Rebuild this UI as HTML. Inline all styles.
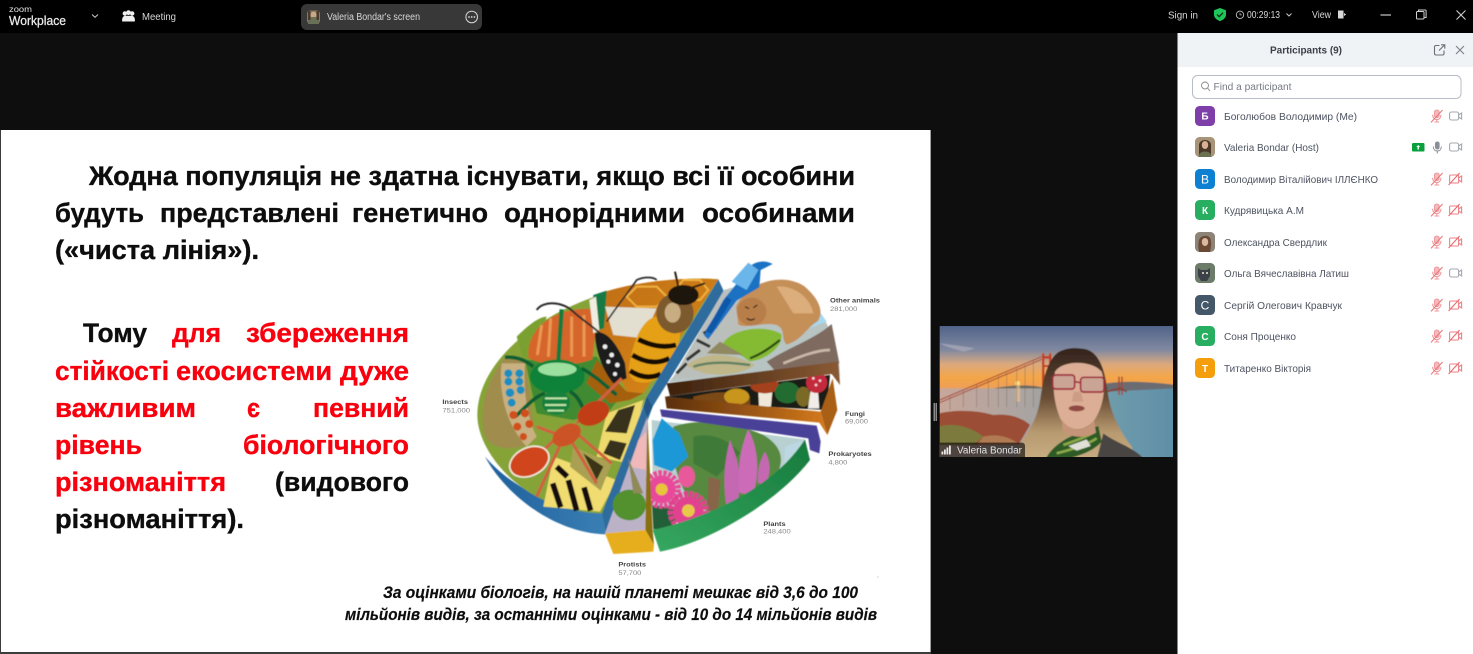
<!DOCTYPE html>
<html lang="uk"><head><meta charset="utf-8"><title>Zoom Workplace</title>
<style>
html,body{margin:0;padding:0;background:#0e0e0e;width:1473px;height:654px;overflow:hidden}
svg{display:block;font-family:"Liberation Sans",sans-serif}
.w{font-size:27px;font-weight:700;fill:#0a0a0a;stroke:#0a0a0a;stroke-width:.35}
.r{fill:#f80010;stroke:#f80010}
.f{font-size:16.5px;font-weight:700;font-style:italic;fill:#111;stroke:#111;stroke-width:.2}
.n{font-size:10.5px;fill:#4d5360}
.t{font-size:10px;fill:#d8d8d8}
.lb{font-size:20px;font-weight:700;fill:#444}
.lv{font-size:20px;fill:#888}
</style></head><body>
<svg width="1473" height="654" viewBox="0 0 1473 654" xmlns="http://www.w3.org/2000/svg">
<defs>
<filter id="b1" x="-5%" y="-5%" width="110%" height="110%"><feGaussianBlur stdDeviation="0.35"/></filter>
<filter id="b2" x="-5%" y="-5%" width="110%" height="110%"><feGaussianBlur stdDeviation="1.5"/></filter>
<filter id="b3" x="-5%" y="-5%" width="110%" height="110%"><feGaussianBlur stdDeviation="1.6"/></filter>
<linearGradient id="sky" x1="0" y1="0" x2="0" y2="1"><stop offset="0" stop-color="#4c5f86"/><stop offset=".4" stop-color="#8089a0"/><stop offset=".62" stop-color="#dca97e"/><stop offset=".82" stop-color="#f4a648"/><stop offset="1" stop-color="#ee9f58"/></linearGradient>
<linearGradient id="wat" x1="0" y1="0" x2="1" y2="0"><stop offset="0" stop-color="#c9a79b"/><stop offset=".4" stop-color="#a8a4a2"/><stop offset=".72" stop-color="#6f9cab"/><stop offset="1" stop-color="#5f8ea8"/></linearGradient>
<linearGradient id="hair" x1="0" y1="0" x2="0" y2="1"><stop offset="0" stop-color="#33231c"/><stop offset=".45" stop-color="#6a4e36"/><stop offset=".75" stop-color="#b89a70"/><stop offset="1" stop-color="#c8ad82"/></linearGradient>
<linearGradient id="org" x1="0" y1="0" x2="1" y2="1"><stop offset="0" stop-color="#c06e14"/><stop offset="1" stop-color="#d98a1c"/></linearGradient>
<linearGradient id="rim" x1="0" y1="0" x2="1" y2="0"><stop offset="0" stop-color="#1f5f9c"/><stop offset="1" stop-color="#3a7fb4"/></linearGradient>
<linearGradient id="grn" x1="0" y1="1" x2="1" y2="0"><stop offset="0" stop-color="#36a860"/><stop offset="1" stop-color="#167a3c"/></linearGradient>
<linearGradient id="fb" x1="0" y1="0" x2="1" y2="0"><stop offset="0" stop-color="#5a2e0c"/><stop offset="1" stop-color="#d57a1c"/></linearGradient>
<linearGradient id="fd" x1="0" y1="0" x2="1" y2="0"><stop offset="0" stop-color="#3c200c"/><stop offset="1" stop-color="#8a5a34"/></linearGradient>
<g id="micoff" fill="none" stroke="#ee9a9e" stroke-width="1.100">
<rect x="3.500" y="0" width="4.600" height="7.600" rx="2.300" fill="#f4bcbe"/><path d="M1.600 4.800c0 3 2 4.800 4.200 4.800s4.200-1.800 4.200-4.800M5.800 9.600v2.400M3.400 12h4.800"/><path d="M0 12.400 11.600 0" stroke="#e8787c"/></g>
<g id="cam" fill="none" stroke="#a4a8b0" stroke-width="1.100"><rect x=".6" y="1" width="9" height="8" rx="1.800"/><path d="M9.600 4 12.600 2v6L9.600 6"/></g>
<g id="camoff" fill="none" stroke="#ee8286" stroke-width="1.100"><rect x=".6" y="1" width="9" height="8" rx="1"/><path d="M9.600 4 12.600 2v6L9.600 6"/><path d="M-.4 11 10.600-1" stroke="#e8686c"/></g>
</defs>

<rect width="1473" height="654" fill="#0e0e0e"/>
<rect width="1473" height="33" fill="#000"/>

<text x="9" y="12" font-size="8" fill="#e2e2e2" textLength="23" lengthAdjust="spacingAndGlyphs">zoom</text>
<text x="9" y="25" font-size="12.500" fill="#ececec" stroke="#ececec" stroke-width=".25" textLength="57" lengthAdjust="spacingAndGlyphs">Workplace</text>
<path d="M92 14.500l3 2.800 3-2.800" fill="none" stroke="#c8c8c8" stroke-width="1"/>
<g fill="#f0f0f0"><circle cx="124.800" cy="13.500" r="2.200"/><circle cx="128.500" cy="12.600" r="2.400"/><circle cx="132.200" cy="13.500" r="2.200"/><path d="M122.200 21.500c-.6-4 1.400-5.800 3-5.800h6.600c1.600 0 3.600 1.800 3 5.800z"/></g>
<text x="142" y="20.200" class="t" textLength="34" lengthAdjust="spacingAndGlyphs">Meeting</text>
<rect x="301" y="4" width="181" height="26" rx="6" fill="#383838"/>
<rect x="307" y="10.500" width="13" height="13" rx="3" fill="#8a7a62"/><ellipse cx="313.500" cy="15" rx="3" ry="3.400" fill="#c8a888"/><path d="M308 24v-5c1-2 3-2 5.500-2s4.500 0 5.500 2v5z" fill="#6a7058"/><rect x="308" y="11" width="2.500" height="9" fill="#4a3a2c"/><rect x="316.500" y="11" width="2.500" height="9" fill="#4a3a2c"/>
<text x="327" y="20.200" class="t" textLength="93" lengthAdjust="spacingAndGlyphs">Valeria Bondar's screen</text>
<circle cx="471.700" cy="17" r="5.800" fill="none" stroke="#d8d8d8" stroke-width="1"/><g fill="#d8d8d8"><circle cx="469" cy="17" r=".9"/><circle cx="471.700" cy="17" r=".9"/><circle cx="474.400" cy="17" r=".9"/></g>

<text x="1168" y="18.500" class="t" textLength="30" lengthAdjust="spacingAndGlyphs">Sign in</text>
<path d="M1220 8l6 2.200v4.600c0 3.200-3 5.200-6 6.400-3-1.200-6-3.200-6-6.400v-4.600z" fill="#1fc45a"/><path d="M1217 14.500l2.200 2.200 3.800-4" fill="none" stroke="#06330f" stroke-width="1.300"/>
<circle cx="1240" cy="14.800" r="3.700" fill="none" stroke="#bdbdbd" stroke-width=".9"/><path d="M1240 12.700v2.200h1.800" fill="none" stroke="#bdbdbd" stroke-width=".7"/>
<text x="1247" y="18.200" class="t" textLength="33" lengthAdjust="spacingAndGlyphs">00:29:13</text>
<path d="M1286.500 13.500l2.500 2.500 2.500-2.500" fill="none" stroke="#c8c8c8" stroke-width="1"/>
<text x="1312" y="18.200" class="t" textLength="19" lengthAdjust="spacingAndGlyphs">View</text>
<rect x="1338" y="10.500" width="5.500" height="8" fill="#d8d8d8"/><path d="M1344 13l2.200 1.500-2.200 1.500z" fill="#d8d8d8"/>
<path d="M1380.500 15h10.500" stroke="#c8c8c8" stroke-width="1.200"/>
<rect x="1416.500" y="11.500" width="7.500" height="7.500" rx="1" fill="none" stroke="#d0d0d0" stroke-width="1"/><path d="M1418.500 11.500v-1.500h6.800a.8.8 0 0 1 .8.800v6.700h-2" fill="none" stroke="#d0d0d0" stroke-width="1"/>
<path d="M1456.500 10.500l9 9M1465.500 10.500l-9 9" stroke="#d0d0d0" stroke-width="1.100"/>

<rect x="0" y="130" width="931" height="524" fill="#3c3c3c"/>
<rect x="1" y="130" width="929.500" height="522" fill="#fff"/>
<g filter="url(#b1)">
<text x="89" y="185" class="w" textLength="766" lengthAdjust="spacingAndGlyphs">Жодна популяція не здатна існувати, якщо всі її особини</text>
<text x="55" y="222" class="w" textLength="89" lengthAdjust="spacingAndGlyphs">будуть</text>
<text x="160" y="222" class="w" textLength="179" lengthAdjust="spacingAndGlyphs">представлені</text>
<text x="352" y="222" class="w" textLength="136" lengthAdjust="spacingAndGlyphs">генетично</text>
<text x="504" y="222" class="w" textLength="181" lengthAdjust="spacingAndGlyphs">однорідними</text>
<text x="702" y="222" class="w" textLength="153" lengthAdjust="spacingAndGlyphs">особинами</text>
<text x="55" y="259" class="w" textLength="204" lengthAdjust="spacingAndGlyphs">(«чиста лінія»).</text>

<text x="83" y="342" class="w" textLength="64" lengthAdjust="spacingAndGlyphs">Тому</text>
<text x="172" y="342" class="w r" textLength="49" lengthAdjust="spacingAndGlyphs">для</text>
<text x="246" y="342" class="w r" textLength="163" lengthAdjust="spacingAndGlyphs">збереження</text>
<text x="55" y="380" class="w r" textLength="114" lengthAdjust="spacingAndGlyphs">стійкості</text>
<text x="176" y="380" class="w r" textLength="156" lengthAdjust="spacingAndGlyphs">екосистеми</text>
<text x="340" y="380" class="w r" textLength="69" lengthAdjust="spacingAndGlyphs">дуже</text>
<text x="55" y="417" class="w r" textLength="141" lengthAdjust="spacingAndGlyphs">важливим</text>
<text x="247" y="417" class="w r" textLength="13" lengthAdjust="spacingAndGlyphs">є</text>
<text x="313" y="417" class="w r" textLength="96" lengthAdjust="spacingAndGlyphs">певний</text>
<text x="55" y="454" class="w r" textLength="87" lengthAdjust="spacingAndGlyphs">рівень</text>
<text x="243" y="454" class="w r" textLength="166" lengthAdjust="spacingAndGlyphs">біологічного</text>
<text x="55" y="491" class="w r" textLength="171" lengthAdjust="spacingAndGlyphs">різноманіття</text>
<text x="275" y="491" class="w" textLength="134" lengthAdjust="spacingAndGlyphs">(видового</text>
<text x="55" y="528" class="w" textLength="189" lengthAdjust="spacingAndGlyphs">різноманіття).</text>

<text x="383" y="598" class="f" textLength="475" lengthAdjust="spacingAndGlyphs">За оцінками біологів, на нашій планеті мешкає від 3,6 до 100</text>
<text x="345" y="620" class="f" textLength="532" lengthAdjust="spacingAndGlyphs">мільйонів видів, за останніми оцінками - від 10 до 14 мільйонів видів</text>
</g>
<rect x="877.500" y="576.500" width="1" height="1" fill="#aaa"/>

<!-- pie -->
<g transform="translate(430 250) scale(.33333)">
<g filter="url(#b2)">
<path d="M165 620C230 740 380 850 527 853L516 788C400 785 250 720 165 620Z" fill="url(#rim)"/>
<path d="M865 88C700 75 480 120 330 220C210 300 140 400 142 500C145 590 230 700 340 750C400 775 460 790 518 790L650 440Z" fill="#86a338"/>
<!-- caterpillar field -->
<path d="M225 320C165 400 145 490 165 560C200 610 270 600 315 570L300 440L285 330Z" fill="#a08c4e"/>
<path d="M215 340C205 420 225 520 290 590L320 560C290 500 280 420 285 340Z" fill="#c8b080"/>
<!-- green lawn behind beetle -->
<path d="M285 330L500 320L580 430L540 480L430 510L320 490Z" fill="#3f8a30"/>
<path d="M260 260C300 220 330 200 350 200L310 330L280 330Z" fill="#7aa030"/>
<!-- honey -->
<path d="M865 88C760 80 620 95 525 125L500 240L590 425L640 430Z" fill="url(#org)"/>
<path d="M640 430L590 425L500 330L470 400L540 460L600 450Z" fill="#a4600f"/>
<path d="M620 110h60l30 30-30 30h-60l-30-30zM760 90h50l25 30-25 30h-50l-25-30z" fill="none" stroke="#f0b040" stroke-width="6"/>
<!-- japanese beetle -->
<path d="M296 325C285 240 370 165 500 178L497 240L487 328C430 350 350 350 296 325Z" fill="#d5652a"/>
<path d="M395 178L385 335" stroke="#157a3c" stroke-width="13"/>
<path d="M335 225L322 315M362 205L355 320M425 200L425 320M462 195L462 320" stroke="#f2a860" stroke-width="9" opacity=".75"/>
<path d="M490 135L530 122L522 235L488 245Z" fill="#127a44"/>
<path d="M478 150L498 140L508 240L490 250Z" fill="#f0ece0"/>
<ellipse cx="382" cy="380" rx="82" ry="52" fill="#0e8238"/>
<ellipse cx="382" cy="358" rx="58" ry="20" fill="#9ce0a0"/>
<ellipse cx="378" cy="458" rx="42" ry="36" fill="#13803e"/>
<path d="M345 445h66M345 465h64M352 482h50" stroke="#c0e4a8" stroke-width="6"/>
<g fill="none" stroke="#0f5f30" stroke-width="11"><path d="M310 350C280 325 250 320 225 322"/><path d="M455 355C500 380 530 410 560 435"/><path d="M345 430C310 440 280 480 255 500"/><path d="M420 425C450 440 460 480 470 500"/></g>
<path d="M320 180C340 150 400 155 430 185C450 205 490 230 510 250" fill="none" stroke="#2a2a2a" stroke-width="6"/>
<!-- caterpillar dots -->
<g fill="#1f8fc0"><circle cx="235" cy="370" r="12"/><circle cx="268" cy="370" r="12"/><circle cx="235" cy="395" r="12"/><circle cx="268" cy="395" r="12"/><circle cx="240" cy="428" r="13"/><circle cx="272" cy="420" r="12"/><circle cx="245" cy="458" r="12"/></g>
<g fill="#d0501a"><circle cx="250" cy="495" r="12"/><circle cx="285" cy="490" r="12"/><circle cx="262" cy="530" r="12"/><circle cx="298" cy="522" r="12"/><circle cx="280" cy="560" r="11"/></g>
<!-- bee -->
<path d="M525 170L680 175L640 265L550 255Z" fill="#e2ded0"/>
<path d="M598 345C610 268 640 198 690 198C755 203 765 250 732 312C702 372 682 398 640 398C610 398 592 382 598 345Z" fill="#e6a018"/>
<g stroke="#120c04" stroke-width="15" fill="none"><path d="M625 268C660 285 695 295 738 285"/><path d="M607 315C640 335 680 345 718 325"/><path d="M600 362C630 382 660 387 692 372"/></g>
<ellipse cx="735" cy="190" rx="56" ry="60" fill="#7c5a2e"/>
<ellipse cx="728" cy="188" rx="24" ry="30" fill="#c8ac82"/>
<ellipse cx="760" cy="135" rx="46" ry="30" fill="#1e160e"/>
<path d="M745 110L735 65M780 115L825 100" stroke="#2a1c08" stroke-width="6"/>
<path d="M530 215C560 170 600 120 620 90C640 80 670 80 680 90" fill="none" stroke="#2a2a2a" stroke-width="5"/>
<!-- longhorn -->
<path d="M495 250C530 235 565 290 585 340L590 385L550 400C518 362 495 300 495 250Z" fill="#1c1c1c"/>
<g fill="#eee"><circle cx="525" cy="290" r="7"/><circle cx="545" cy="315" r="7"/><circle cx="562" cy="345" r="7"/><circle cx="535" cy="335" r="6"/><circle cx="555" cy="372" r="6"/></g>
<!-- butterfly -->
<path d="M530 490L640 450L595 640L500 620Z" fill="#eeda6c"/>
<path d="M565 480L615 465L590 550L525 545ZM540 570L590 580L570 630L520 610Z" fill="#17130c" opacity=".85"/>
<path d="M370 620L560 690L510 785L340 770Z" fill="#f0dc70"/>
<g stroke="#14100a" stroke-width="17"><path d="M368 700L392 772"/><path d="M415 690L440 782"/><path d="M462 712L482 782"/><path d="M380 650L412 680"/></g>
<path d="M430 590L545 640L512 722L420 650Z" fill="#aaa052"/>
<path d="M460 610L520 650L500 690Z" fill="#3a3418"/>
<!-- ant -->
<g fill="none" stroke="#d06040" stroke-width="9"><path d="M400 560L320 530"/><path d="M395 575L320 740"/><path d="M425 575L500 700"/><path d="M440 550L545 640"/><path d="M440 520L575 385"/><path d="M400 545L330 610"/></g>
<ellipse cx="298" cy="635" rx="62" ry="42" fill="#d0441a" stroke="#f4e8d8" stroke-width="5" transform="rotate(-25 298 635)"/>
<ellipse cx="410" cy="555" rx="46" ry="30" fill="#cc5228" transform="rotate(-30 410 555)"/>
<ellipse cx="490" cy="490" rx="50" ry="34" fill="#c03c18" transform="rotate(-25 490 490)"/>
<path d="M865 88L882 125L668 470L527 853L516 790L640 470L650 440Z" fill="#2d6c9e"/>
<path d="M650 440L668 470L652 500L640 470Z" fill="#225484"/>

<!-- other animals -->
<path d="M882 120C1000 80 1120 125 1170 190C1215 250 1235 330 1228 405L1205 345L715 398L730 380Z" fill="#b8c4c2"/>
<path d="M1130 130L1190 215L1110 245Z" fill="#a8d8ee"/>
<path d="M882 125L730 385L830 380L900 260L950 230L930 180Z" fill="#bbbfbc"/>
<path d="M800 270L840 290M770 330L810 300M740 370L770 340M860 230L820 250" stroke="#33362f" stroke-width="9"/>
<path d="M1010 335C1080 290 1150 270 1205 222L1228 340L1040 368Z" fill="#7f6a5e"/>
<path d="M1060 340C1110 320 1160 300 1200 300" stroke="#c8b8a8" stroke-width="8" fill="none"/>
<path d="M918 170C955 92 1060 68 1122 108C1172 150 1182 190 1162 215C1132 230 1117 270 1070 284C1050 262 1070 240 1040 225C1000 215 950 237 925 224Z" fill="#c58f58"/>
<path d="M1040 110C1090 105 1140 140 1150 190L1090 190Z" fill="#dcae7c"/>
<ellipse cx="965" cy="185" rx="44" ry="42" fill="#b87e48"/>
<path d="M945 170l12 6M982 165l-12 8M950 205q14 10 24 0" stroke="#3a2412" stroke-width="4" fill="none"/>
<path d="M925 95C950 42 990 22 1028 42L992 60L988 112L920 152L835 268L822 256L880 150Z" fill="#1f72c2"/>
<path d="M905 95L955 38L985 60L950 120Z" fill="#6ab6ea"/>
<path d="M845 250L905 150L890 140L825 245Z" fill="#0f58a8"/>
<path d="M878 282C900 238 1000 220 1054 252C1062 292 1000 334 958 334C920 302 890 302 878 282Z" fill="#85bb30"/>
<path d="M960 325C1000 310 1030 285 1050 270" stroke="#2f4a18" stroke-width="7" fill="none"/>
<path d="M770 345C820 306 900 303 975 345C930 380 820 387 770 345Z" fill="#bfb68a"/>
<path d="M790 350C850 330 920 340 960 345" stroke="#5f8060" stroke-width="7" fill="none"/>
<path d="M830 310L870 275L940 315Z" fill="#8f8860"/>
<!-- fungi -->
<path d="M722 438L1200 375L1190 480L960 468L705 440Z" fill="#1e1a14"/>
<path d="M790 440C850 425 900 420 960 440L960 468L790 452Z" fill="#7a4a18"/>
<ellipse cx="920" cy="440" rx="38" ry="24" fill="#c8961e"/>
<path d="M985 425h42l-4 45h-36z" fill="#efe8d8"/>
<ellipse cx="1005" cy="408" rx="44" ry="22" fill="#a4401a"/>
<ellipse cx="1072" cy="428" rx="38" ry="32" fill="#246c30"/>
<ellipse cx="1120" cy="440" rx="22" ry="30" fill="#7a6a28"/>
<path d="M1142 420h22l4 55h-34z" fill="#f2ece8"/>
<ellipse cx="1160" cy="398" rx="32" ry="31" fill="#c42c3c"/>
<g fill="#f4d8d8"><circle cx="1150" cy="385" r="4"/><circle cx="1170" cy="392" r="4"/><circle cx="1158" cy="405" r="4"/></g>
<path d="M710 400L1225 335L1230 405L1205 372L720 438Z" fill="url(#fd)"/>
<path d="M705 440L1172 485L1192 555L1168 518L710 475Z" fill="url(#fb)"/>
<path d="M1172 485L1208 385L1222 480L1192 555Z" fill="#a95f12"/>
<!-- plants -->
<path d="M665 510L1125 568C1060 680 950 760 840 790L670 838Z" fill="#b8d0d0"/>
<path d="M730 530C800 505 910 515 1000 555C1060 590 1070 640 1025 695C970 755 890 785 840 785C750 760 720 640 730 530Z" fill="#58893f"/>
<path d="M790 560C840 545 900 570 930 610L860 680L790 640Z" fill="#3f7a38"/>
<path d="M1065 590L1122 570L1062 665Z" fill="#bcd8e2"/>
<path d="M836 680L872 690L864 782H832Z" fill="#86654a"/>
<path d="M900 570C928 640 938 690 922 758L888 762C878 690 884 630 900 570Z" fill="#c468b2"/>
<path d="M955 538C988 600 988 680 967 738L928 728C923 660 928 600 955 538Z" fill="#cc6cb8"/>
<path d="M1005 605C1024 640 1022 672 1005 708L983 698C983 660 988 635 1005 605Z" fill="#c468b2"/>
<path d="M668 570L695 505L748 550L775 620L725 665L672 645Z" fill="#1f98d6"/>
<path d="M666 765L745 775L735 836L670 838Z" fill="#235e38"/>
<circle cx="695" cy="718" r="42" fill="#e8489a"/><circle cx="695" cy="718" r="50" fill="none" stroke="#e8489a" stroke-width="16" stroke-dasharray="11 4"/><circle cx="695" cy="718" r="18" fill="#e8c43a"/>
<circle cx="775" cy="785" r="46" fill="#e0428f"/><circle cx="775" cy="785" r="54" fill="none" stroke="#e0428f" stroke-width="16" stroke-dasharray="12 4"/><circle cx="775" cy="782" r="19" fill="#e8c84a"/>
<ellipse cx="770" cy="680" rx="25" ry="32" fill="#e8589a"/>
<path d="M668 840C800 810 1020 730 1125 568L1140 630C1040 760 830 880 690 905Z" fill="url(#grn)"/>
<path d="M690 478L1160 527L1172 575L1168 610L1140 600L1135 565L695 500Z" fill="#4a3f98"/>
<!-- protists -->
<path d="M652 500L646 840L525 850L600 640Z" fill="#bcb2c8"/>
<path d="M625 570L650 545L648 660L600 650Z" fill="#f0b8b8"/>
<ellipse cx="598" cy="765" rx="50" ry="46" fill="#53902f"/>
<path d="M595 625L640 730L610 730Z" fill="#8f8a58"/>
<path d="M652 495L668 840L672 885L646 840Z" fill="#8a6f10"/>
<path d="M525 850L646 840L672 885L670 905L550 912Z" fill="#e6ae1c"/>
</g>
<g filter="url(#b1)">
<text x="37" y="462" class="lb" textLength="77" lengthAdjust="spacingAndGlyphs">Insects</text>
<text x="37" y="487" class="lv" textLength="83" lengthAdjust="spacingAndGlyphs">751,000</text>
<text x="1200" y="158" class="lb" textLength="150" lengthAdjust="spacingAndGlyphs">Other animals</text>
<text x="1200" y="183" class="lv" textLength="82" lengthAdjust="spacingAndGlyphs">281,000</text>
<text x="1245" y="498" class="lb" textLength="60" lengthAdjust="spacingAndGlyphs">Fungi</text>
<text x="1245" y="520" class="lv" textLength="69" lengthAdjust="spacingAndGlyphs">69,000</text>
<text x="1195" y="618" class="lb" textLength="130" lengthAdjust="spacingAndGlyphs">Prokaryotes</text>
<text x="1195" y="643" class="lv" textLength="57" lengthAdjust="spacingAndGlyphs">4,800</text>
<text x="1000" y="828" class="lb" textLength="67" lengthAdjust="spacingAndGlyphs">Plants</text>
<text x="1000" y="851" class="lv" textLength="82" lengthAdjust="spacingAndGlyphs">248,400</text>
<text x="565" y="950" class="lb" textLength="83" lengthAdjust="spacingAndGlyphs">Protists</text>
<text x="565" y="975" class="lv" textLength="69" lengthAdjust="spacingAndGlyphs">57,700</text>
</g>
</g>

<rect x="933.500" y="403" width="1.500" height="18" fill="#8a8a8a"/><rect x="935.500" y="403" width="1.500" height="18" fill="#8a8a8a"/>

<!-- video tile -->
<svg x="939.700" y="326" width="233.300" height="131" viewBox="29 18 700 393">
<g filter="url(#b3)">
<rect x="20" y="10" width="720" height="198" fill="url(#sky)"/>
<path d="M30 70C70 75 110 80 135 85L100 95C70 85 45 80 30 70Z" fill="#a8a8b8" opacity=".8"/>
<rect x="20" y="205" width="720" height="215" fill="url(#wat)"/>
<path d="M190 205C260 192 320 195 345 205Z" fill="#6b6a62"/>
<path d="M530 190C600 180 680 188 740 195V205L590 212L530 215Z" fill="#6a6c72"/>
<circle cx="263" cy="190" r="7" fill="#ffe080"/>
<rect x="258" y="195" width="12" height="50" fill="#f0c890" opacity=".6"/>
<path d="M29 240L335 110M29 248L335 118" stroke="#a8442c" stroke-width="3" fill="none"/>
<path d="M60 228V270M100 212V262M140 195V262M175 180V262M205 168V262M230 158V262M260 145V262M285 135V262M310 122V262" stroke="#6a5a50" stroke-width="1.500" opacity=".75"/>
<rect x="336" y="100" width="7" height="110" fill="#c44028"/><rect x="357" y="100" width="7" height="110" fill="#c44028"/>
<rect x="336" y="108" width="28" height="8" fill="#c44028"/><rect x="336" y="135" width="28" height="6" fill="#c44028"/><rect x="336" y="165" width="28" height="6" fill="#c44028"/>
<rect x="565" y="170" width="4" height="55" fill="#a84030"/><rect x="574" y="170" width="4" height="55" fill="#a84030"/>
<path d="M530 215L572 205L590 215" stroke="#8a4030" stroke-width="5" fill="none"/>
<path d="M20 282C70 268 140 270 190 285C240 280 280 295 300 315L265 375H20Z" fill="#9c4e36"/>
<path d="M20 320C80 305 130 325 160 350L130 375H20Z" fill="#7c7a3c"/>
<path d="M160 350C200 340 240 350 270 375H140Z" fill="#b07a52"/>
<!-- woman -->
<path d="M400 90C360 100 342 160 332 230C322 300 298 330 270 372L262 420H620L605 380C560 320 540 270 532 210C522 130 498 88 455 86C435 83 415 84 400 90Z" fill="url(#hair)"/>
<path d="M520 340C560 370 610 380 645 420H500Z" fill="#4a4442"/>
<path d="M345 420C370 370 420 345 505 318L515 365C490 395 440 410 400 420Z" fill="#2f5a26"/>
<path d="M400 375C430 365 470 350 495 335M380 400C420 390 470 375 500 355" stroke="#8aa848" stroke-width="8" fill="none"/>
<path d="M415 378L470 358L482 378L440 392Z" fill="#e0e0d8"/>
<path d="M375 155C398 120 485 120 515 155C530 200 520 262 492 302C460 338 418 334 392 298C372 252 366 200 375 155Z" fill="#dcae96"/>
<path d="M395 300C430 345 470 335 492 302L498 338C460 358 420 352 398 332Z" fill="#c69478"/>
<ellipse cx="440" cy="265" rx="24" ry="9" fill="#8f4a42"/>
<path d="M432 215L425 245H460L452 215Z" fill="#cc9c84"/>
<rect x="368" y="165" width="66" height="42" rx="9" fill="#caa596" stroke="#a02c3c" stroke-width="5"/>
<rect x="452" y="172" width="70" height="44" rx="9" fill="#caa596" stroke="#a02c3c" stroke-width="5"/>
<path d="M434 185L452 188" stroke="#a02c3c" stroke-width="5"/>
</g>
<path d="M29 368H275q10 0 10 10V412H29Z" fill="#000" opacity=".6"/>
</svg>
<g fill="#e8e8e8"><rect x="941.500" y="451.500" width="1.800" height="3"/><rect x="944" y="449.500" width="1.800" height="5"/><rect x="946.500" y="447.500" width="1.800" height="7"/><rect x="949" y="445.500" width="1.800" height="9"/></g>
<text x="957" y="453.500" font-size="10" fill="#e4e4e4" textLength="65" lengthAdjust="spacingAndGlyphs">Valeria Bondar</text>

<!-- participants panel -->
<rect x="1177.500" y="33" width="295.500" height="621" fill="#fff"/>
<rect x="1177.500" y="33" width="295.500" height="34" fill="#f0f3f5"/>
<text x="1270" y="53.500" font-size="10.500" font-weight="700" fill="#3a3f48" textLength="72" lengthAdjust="spacingAndGlyphs">Participants (9)</text>
<path d="M1439.500 45.500h-3.500a1.500 1.500 0 0 0-1.500 1.500v6.500a1.500 1.500 0 0 0 1.500 1.500h6.500a1.500 1.500 0 0 0 1.500-1.500v-3M1439 50.500l5.500-5.500M1441 44.800h3.800v3.800" fill="none" stroke="#6a7078" stroke-width="1.100"/>
<path d="M1456 46l8 8M1464 46l-8 8" stroke="#7a808a" stroke-width="1.100"/>
<rect x="1192.500" y="75.500" width="268.500" height="23" rx="5" fill="#fff" stroke="#b8bcc6" stroke-width="1"/>
<circle cx="1205" cy="85.500" r="3.500" fill="none" stroke="#888" stroke-width=".9"/><path d="M1207.500 88l2.500 3" stroke="#888" stroke-width=".9"/>
<text x="1213.500" y="90" font-size="10" fill="#777b84" textLength="78" lengthAdjust="spacingAndGlyphs">Find a participant</text>

<g font-size="10" font-weight="700" fill="#fff" text-anchor="middle">
<rect x="1195" y="106" width="20" height="20" rx="4.500" fill="#7e3fa8"/><text x="1205" y="119.500">Б</text>
<rect x="1195" y="169" width="20" height="20" rx="4.500" fill="#0e80d2"/><text x="1205" y="183.500" font-size="12" font-weight="400">В</text>
<rect x="1195" y="200" width="20" height="20" rx="4.500" fill="#27ae60"/><text x="1205" y="214">К</text>
<rect x="1195" y="295" width="20" height="20" rx="4.500" fill="#45586a"/><text x="1205" y="309.500" font-size="12" font-weight="400">С</text>
<rect x="1195" y="326" width="20" height="20" rx="4.500" fill="#27ae60"/><text x="1205" y="340">С</text>
<rect x="1195" y="358" width="20" height="20" rx="4.500" fill="#f59e0b"/><text x="1205" y="372">Т</text>
</g>
<rect x="1195" y="137" width="20" height="20" rx="4.500" fill="#a89478"/><path d="M1199 157v-12c0-3 3-5 6-5s6 2 6 5v12z" fill="#4a3828"/><ellipse cx="1205" cy="145" rx="3.200" ry="4" fill="#d8b094"/><path d="M1198.500 157c.5-4 3-5.500 6.500-5.500s6 1.500 6.500 5.500z" fill="#6a7050"/>
<rect x="1195" y="232" width="20" height="20" rx="4.500" fill="#8c8478"/><path d="M1199 252c-1-6-1-11 1-14 3-3 8-3 10 0 2 4 1 9 0 14z" fill="#6a4a34"/><ellipse cx="1205" cy="242" rx="3.200" ry="4" fill="#dcb8a0"/>
<rect x="1195" y="263" width="20" height="20" rx="4.500" fill="#6c7c68"/><path d="M1198 268l3 2h6l3-2v8l-3 5h-6l-3-5z" fill="#3c4048"/><circle cx="1203" cy="273" r="1" fill="#e8e8d0"/><circle cx="1207" cy="273" r="1" fill="#e8e8d0"/>

<text x="1224" y="120" class="n" textLength="133" lengthAdjust="spacingAndGlyphs">Боголюбов Володимир (Me)</text>
<text x="1224" y="151" class="n" textLength="95" lengthAdjust="spacingAndGlyphs">Valeria Bondar (Host)</text>
<text x="1224" y="183" class="n" textLength="154" lengthAdjust="spacingAndGlyphs">Володимир Віталійович ІЛЛЄНКО</text>
<text x="1224" y="214" class="n" textLength="80" lengthAdjust="spacingAndGlyphs">Кудрявицька А.М</text>
<text x="1224" y="246" class="n" textLength="103" lengthAdjust="spacingAndGlyphs">Олександра Свердлик</text>
<text x="1224" y="277" class="n" textLength="125" lengthAdjust="spacingAndGlyphs">Ольга Вячеславівна Латиш</text>
<text x="1224" y="309" class="n" textLength="118" lengthAdjust="spacingAndGlyphs">Сергій Олегович Кравчук</text>
<text x="1224" y="340" class="n" textLength="72" lengthAdjust="spacingAndGlyphs">Соня Проценко</text>
<text x="1224" y="372" class="n" textLength="87" lengthAdjust="spacingAndGlyphs">Титаренко Вікторія</text>

<use href="#micoff" x="1431" y="110"/><use href="#cam" x="1449" y="111"/>
<rect x="1412" y="143" width="12.500" height="8.500" rx="1.300" fill="#0aa03c"/><path d="M1418.200 145l2 2h-1.300v2.500h-1.400V147h-1.300z" fill="#fff"/>
<rect x="1435" y="141.500" width="4.600" height="8" rx="2.300" fill="#8a8e96"/><path d="M1433.300 146.500c0 3 1.800 4.500 4 4.500s4-1.500 4-4.500M1437.300 151v2.500" fill="none" stroke="#8a8e96" stroke-width="1"/>
<use href="#cam" x="1449" y="142"/>
<use href="#micoff" x="1431" y="173"/><use href="#camoff" x="1449" y="174"/>
<use href="#micoff" x="1431" y="204"/><use href="#camoff" x="1449" y="205"/>
<use href="#micoff" x="1431" y="236"/><use href="#camoff" x="1449" y="237"/>
<use href="#micoff" x="1431" y="267"/><use href="#cam" x="1449" y="268"/>
<use href="#micoff" x="1431" y="299"/><use href="#camoff" x="1449" y="300"/>
<use href="#micoff" x="1431" y="330"/><use href="#camoff" x="1449" y="331"/>
<use href="#micoff" x="1431" y="362"/><use href="#camoff" x="1449" y="363"/>
</svg>
</body></html>
